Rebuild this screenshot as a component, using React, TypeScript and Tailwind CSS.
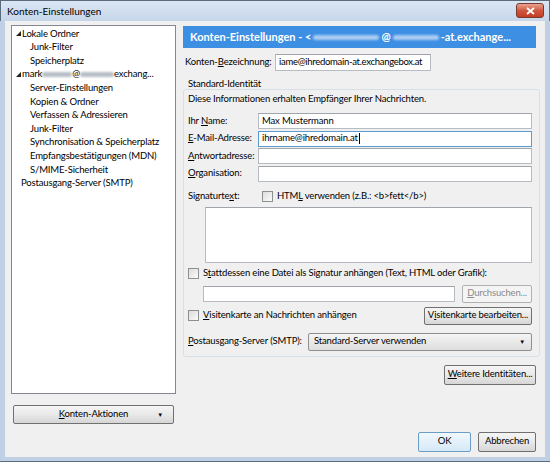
import React from 'react';

const font = { fontFamily: 'Lato, "Noto Sans", sans-serif' };

function U({ children }: { children: React.ReactNode }) {
  return <span className="underline underline-offset-[1px]">{children}</span>;
}

function Blur({ w }: { w: number }) {
  return (
    <span
      className="inline-block h-[5px] rounded-full bg-[#9aa3ad] blur-[1.2px] align-middle opacity-70"
      style={{ width: w }}
    />
  );
}

function Tri() {
  return (
    <svg width="5" height="5" viewBox="0 0 5 5" className="mr-[1px] shrink-0">
      <polygon points="5,0 5,5 0,5" fill="#222" />
    </svg>
  );
}

function CheckBox() {
  return (
    <span className="inline-block h-[11px] w-[11px] shrink-0 border border-[#8e8f8f] bg-gradient-to-br from-[#dcdcdc] to-[#fbfbfb]" />
  );
}

function TextInput({ value, focus, className = '' }: { value?: string; focus?: boolean; className?: string }) {
  return (
    <div
      className={`flex h-[16px] items-center overflow-hidden whitespace-nowrap bg-white pl-[3px] text-black ${
        focus ? 'border border-[#5b9bd5]' : 'border border-[#b7bbc2] border-t-[#a0a4ab]'
      } ${className}`}
    >
      {value}
      {focus && <span className="ml-[1px] inline-block h-[11px] w-[1px] bg-black" />}
    </div>
  );
}

function Btn({ children, className = '', disabled, focus }: { children: React.ReactNode; className?: string; disabled?: boolean; focus?: boolean }) {
  const look = disabled
    ? 'border-[#adb2b5] bg-[#f4f4f4] text-[#8a8a8a]'
    : focus
    ? 'border-[#6a9ec9] bg-gradient-to-b from-[#f1f8fd] to-[#d6e9f7] text-black'
    : 'border-[#707070] bg-gradient-to-b from-[#f5f5f5] via-[#e9e9e9] to-[#d6d6d6] text-black';
  return (
    <div className={`flex items-center justify-center whitespace-nowrap rounded-[2px] border ${look} ${className}`}>
      {children}
    </div>
  );
}

const tree = [
  { t: 'Lokale Ordner', top: true },
  { t: 'Junk-Filter' },
  { t: 'Speicherplatz' },
  { t: 'mark', top: true, acct: true },
  { t: 'Server-Einstellungen' },
  { t: 'Kopien & Ordner' },
  { t: 'Verfassen & Adressieren' },
  { t: 'Junk-Filter' },
  { t: 'Synchronisation & Speicherplatz' },
  { t: 'Empfangsbestätigungen (MDN)' },
  { t: 'S/MIME-Sicherheit' },
  { t: 'Postausgang-Server (SMTP)', root: true },
];

export default function App() {
  return (
    <div
      className="flex h-[462px] w-[550px] flex-col overflow-hidden whitespace-nowrap bg-[#bfd0e4] text-[9.5px] tracking-[-0.15px] text-black"
      style={font}
    >
      {/* title bar */}
      <div className="relative flex h-[21px] shrink-0 items-center border-l border-t border-r border-[#5a6b7c] bg-gradient-to-b from-[#dbe6f3] to-[#c6d6e9] pl-[6px] text-[10px] tracking-normal">
        Konten-Einstellungen
        <div className="absolute right-[5px] top-[2px] flex h-[15px] w-[28px] items-center justify-center rounded-[3px] border border-[#7a3a30] bg-gradient-to-b from-[#e8a493] via-[#d0573f] to-[#c33b22]">
          <svg width="9" height="8" viewBox="0 0 9 8">
            <path d="M1 1 L8 7 M8 1 L1 7" stroke="white" strokeWidth="1.8" />
          </svg>
        </div>
      </div>

      {/* body */}
      <div className="mx-[5px] flex h-[436px] shrink-0 bg-[#f0f0f0] pl-[6px] pr-[5px] pt-[4px]">
        {/* left column */}
        <div className="flex w-[165px] shrink-0 flex-col">
          <div className="h-[369px] border border-[#828790] bg-white pt-[1px]">
            {tree.map((r, i) => (
              <div
                key={i}
                className={`flex h-[13.6px] items-center ${r.top ? 'pl-[4px]' : r.root ? 'pl-[9px]' : 'pl-[18px]'}`}
              >
                {r.top && <Tri />}
                {r.acct ? (
                  <span className="flex items-center">
                    mark<Blur w={30} />@<Blur w={34} />exchang...
                  </span>
                ) : (
                  r.t
                )}
              </div>
            ))}
          </div>
          <Btn className="relative mx-[2px] mt-[11px] h-[19px]">
            <span>
              <U>K</U>onten-Aktionen
            </span>
            <span className="absolute right-[10px] text-[6px]">▼</span>
          </Btn>
        </div>

        {/* right column */}
        <div className="ml-[7px] flex w-[357px] flex-col">
          <div className="mt-[1px] flex h-[22px] w-[353px] items-center bg-[#3d8fe4] pl-[7px] text-[11px] font-bold tracking-normal text-white">
            Konten-Einstellungen - &lt;
            <span className="mx-[2px] inline-block h-[5px] w-[66px] rounded-full bg-[#a9ccf2] blur-[1.2px]" />@
            <span className="mx-[2px] inline-block h-[5px] w-[46px] rounded-full bg-[#a9ccf2] blur-[1.2px]" />
            -at.exchange...
          </div>

          <div className="mt-[6px] flex h-[17px] items-center">
            <span className="w-[92px] pl-[2px]">
              Konten-<U>B</U>ezeichnung:
            </span>
            <TextInput value="iame@ihredomain-at.exchangebox.at" className="h-[17px] w-[156px] tracking-[-0.3px]" />
          </div>

          {/* group */}
          <div className="mt-[6px] pl-[5px] leading-[13px]">Standard-Identität</div>
          <div className="mt-[-1px] rounded-[3px] border border-[#d5dfe5] pb-[5px] pl-[4px] pr-[7px]">
            <div className="mt-[2px] h-[13px] leading-[13px]">Diese Informationen erhalten Empfänger Ihrer Nachrichten.</div>

            {[
              [<>Ihr <U>N</U>ame:</>, 'Max Mustermann', false],
              [<><U>E</U>-Mail-Adresse:</>, 'ihrname@ihredomain.at', true],
              [<><U>A</U>ntwortadresse:</>, '', false],
              [<><U>O</U>rganisation:</>, '', false],
            ].map(([l, v, f], i) => (
              <div key={i} className={`flex items-center ${i === 0 ? 'mt-[8px]' : 'mt-[1.5px]'}`}>
                <span className="w-[70px]">{l as React.ReactNode}</span>
                <TextInput value={v as string} focus={f as boolean} className="flex-1" />
              </div>
            ))}

            <div className="mt-[8px] flex h-[13px] items-center">
              <span className="w-[74px]">
                Signaturte<U>x</U>t:
              </span>
              <CheckBox />
              <span className="ml-[4px]">
                HTM<U>L</U> verwenden (z.B.: &lt;b&gt;fett&lt;/b&gt;)
              </span>
            </div>
            <div className="ml-[17px] mt-[4px] h-[56px] border border-[#b7bbc2] border-t-[#a0a4ab] bg-white" />

            <div className="mt-[4px] flex h-[13px] items-center">
              <CheckBox />
              <span className="ml-[4px]">
                S<U>t</U>attdessen eine Datei als Signatur anhängen (Text, HTML oder Grafik):
              </span>
            </div>
            <div className="mt-[5px] flex items-center">
              <TextInput className="ml-[15px] w-[252px]" />
              <Btn disabled className="ml-[7px] h-[18px] flex-1">
                <span>
                  <U>D</U>urchsuchen...
                </span>
              </Btn>
            </div>
            <div className="mt-[4px] flex h-[18px] items-center">
              <CheckBox />
              <span className="ml-[4px] flex-1">
                <U>V</U>isitenkarte an Nachrichten anhängen
              </span>
              <Btn className="h-[18px] w-[108px]">
                <span>
                  V<U>i</U>sitenkarte bearbeiten...
                </span>
              </Btn>
            </div>
            <div className="mt-[8px] flex items-center">
              <span className="w-[120px]">
                <U>P</U>ostausgang-Server (SMTP):
              </span>
              <div className="relative flex h-[18px] flex-1 items-center rounded-[2px] border border-[#8e8f8f] bg-gradient-to-b from-[#f4f4f4] to-[#dedede] pl-[5px]">
                Standard-Server verwenden
                <span className="absolute right-[6px] text-[6px]">▼</span>
              </div>
            </div>
          </div>

          <div className="mt-[8px] flex justify-end pr-[4px]">
            <Btn className="h-[20px] w-[92px]">
              <span>
                <U>W</U>eitere Identitäten...
              </span>
            </Btn>
          </div>

          <div className="mt-[47px] flex justify-end gap-[7px] pr-[4px]">
            <Btn focus className="h-[20px] w-[53px]">
              OK
            </Btn>
            <Btn className="h-[20px] w-[58px]">Abbrechen</Btn>
          </div>
        </div>
      </div>
      <div className="flex-1 border-b border-[#5a6b7c]" />
    </div>
  );
}
